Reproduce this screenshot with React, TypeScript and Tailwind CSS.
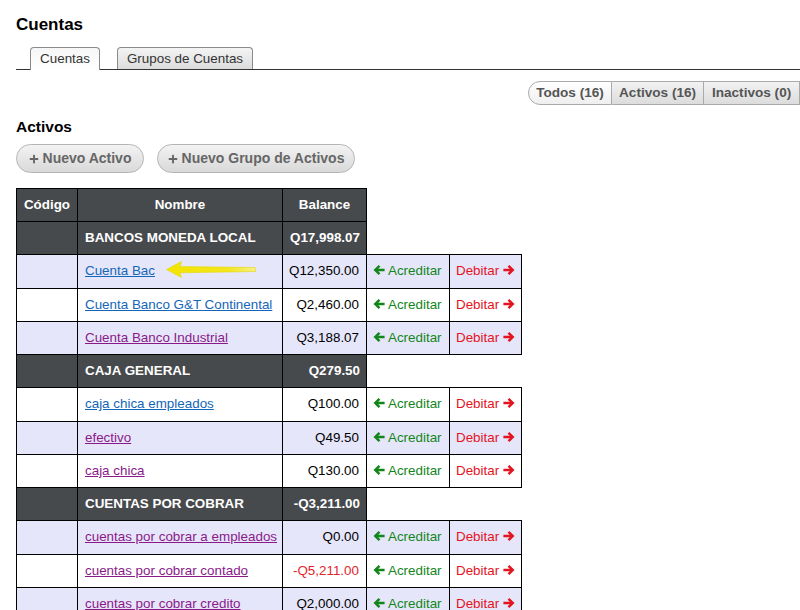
import { FaPlus } from "react-icons/fa";

type Row =
  | { kind: "group"; name: string; balance: string }
  | { kind: "item"; name: string; balance: string; visited?: boolean; negative?: boolean; shaded?: boolean };

const rows: Row[] = [
  { kind: "group", name: "BANCOS MONEDA LOCAL", balance: "Q17,998.07" },
  { kind: "item", name: "Cuenta Bac", balance: "Q12,350.00", shaded: true },
  { kind: "item", name: "Cuenta Banco G&T Continental", balance: "Q2,460.00" },
  { kind: "item", name: "Cuenta Banco Industrial", balance: "Q3,188.07", visited: true, shaded: true },
  { kind: "group", name: "CAJA GENERAL", balance: "Q279.50" },
  { kind: "item", name: "caja chica empleados", balance: "Q100.00" },
  { kind: "item", name: "efectivo", balance: "Q49.50", visited: true, shaded: true },
  { kind: "item", name: "caja chica", balance: "Q130.00", visited: true },
  { kind: "group", name: "CUENTAS POR COBRAR", balance: "-Q3,211.00" },
  { kind: "item", name: "cuentas por cobrar a empleados", balance: "Q0.00", visited: true, shaded: true },
  { kind: "item", name: "cuentas por cobrar contado", balance: "-Q5,211.00", visited: true, negative: true },
  { kind: "item", name: "cuentas por cobrar credito", balance: "Q2,000.00", visited: true, shaded: true },
];

// chunky font-awesome style arrows
function ArrowLeft() {
  return (
    <svg width="12" height="12" viewBox="0 0 12 12" className="inline-block align-[-1px]">
      <path d="M0.5 6 L5.6 0.9 L7.4 2.7 L5.2 4.8 H11.6 V7.2 H5.2 L7.4 9.3 L5.6 11.1 Z" fill="currentColor" />
    </svg>
  );
}

function ArrowRight() {
  return (
    <svg width="12" height="12" viewBox="0 0 12 12" className="inline-block align-[-1px]">
      <path d="M11.5 6 L6.4 0.9 L4.6 2.7 L6.8 4.8 H0.4 V7.2 H6.8 L4.6 9.3 L6.4 11.1 Z" fill="currentColor" />
    </svg>
  );
}

function YellowArrow() {
  return (
    <svg className="absolute left-[164px] top-[259px]" width="96" height="22" viewBox="0 0 96 22">
      <defs>
        <linearGradient id="ya" x1="0" x2="1" y1="0" y2="0">
          <stop offset="0" stopColor="#f2e400" />
          <stop offset="0.7" stopColor="#f3e620" />
          <stop offset="1" stopColor="#f6f08a" />
        </linearGradient>
      </defs>
      <path
        d="M2.5 10.5 L17.5 2.5 L16 7.6 L91 8.5 L92 12.5 L16 13.8 L17.5 18.5 Z"
        fill="url(#ya)"
        stroke="#e6d600"
        strokeWidth="0.6"
        strokeLinejoin="round"
      />
    </svg>
  );
}

export default function App() {
  return (
    <div className="relative h-[610px] w-[800px] overflow-hidden bg-white pl-4 font-['Liberation_Sans',Arial,sans-serif] text-[13.4px] text-black">
      <h1 className="pt-[15px] text-[17px] font-bold leading-5">Cuentas</h1>

      <div className="mt-[12px] flex items-end gap-[17px] border-b border-[#333] pl-[14px]">
        <div className="-mb-px flex h-[23px] w-[70px] items-center justify-center rounded-t-[4px] border border-b-0 border-[#8a8a8a] bg-gradient-to-b from-[#f6f6f6] to-white pt-px text-[13.4px] text-[#333]">
          Cuentas
        </div>
        <div className="flex h-[22px] w-[136px] items-center justify-center rounded-t-[4px] border border-b-0 border-[#8a8a8a] bg-gradient-to-b from-[#f4f4f4] to-[#dcdcdc] pt-px text-[13.4px] text-[#333]">
          Grupos de Cuentas
        </div>
      </div>

      <div className="ml-[512px] mt-[11px] flex h-[24px] whitespace-nowrap text-[13.6px] font-bold text-[#555]">
        <div className="flex w-[91px] items-center justify-center rounded-l-full border border-[#aaa] bg-gradient-to-b from-white to-[#efefef]">
          Todos (16)
        </div>
        <div className="flex w-[100px] items-center justify-center border border-l-0 border-[#aaa] bg-gradient-to-b from-[#f2f2f2] to-[#dcdcdc]">
          Activos (16)
        </div>
        <div className="flex w-[104px] items-center justify-center border border-l-0 border-[#aaa] bg-gradient-to-b from-[#f2f2f2] to-[#dcdcdc]">
          Inactivos (0)
        </div>
      </div>

      <h2 className="mt-[13px] text-[15.5px] font-bold leading-[18px]">Activos</h2>

      <div className="mt-2 flex gap-[13px] text-[14px] font-bold text-[#666]">
        <button className="flex h-[29px] w-[128px] items-center justify-center gap-1 rounded-full border border-[#b5b5b5] bg-gradient-to-b from-[#f3f3f3] to-[#d9d9d9]">
          <FaPlus className="h-[10px] w-[10px]" /> Nuevo Activo
        </button>
        <button className="flex h-[29px] w-[198px] items-center justify-center gap-1 rounded-full border border-[#b5b5b5] bg-gradient-to-b from-[#f3f3f3] to-[#d9d9d9]">
          <FaPlus className="h-[10px] w-[10px]" /> Nuevo Grupo de Activos
        </button>
      </div>

      <table className="mt-[15px] w-[505px] table-fixed border-collapse">
        <colgroup>
          <col className="w-[61px]" />
          <col className="w-[205px]" />
          <col className="w-[84px]" />
          <col className="w-[83px]" />
          <col className="w-[72px]" />
        </colgroup>
        <thead>
          <tr className="h-[33px] bg-[#474a4d] font-bold text-white">
            <th className="border border-black px-[6px] text-center">Código</th>
            <th className="border border-black px-[6px] text-center">Nombre</th>
            <th className="border border-black px-[6px] text-center">Balance</th>
          </tr>
        </thead>
        <tbody>
          {rows.map((r, i) =>
            r.kind === "group" ? (
              <tr key={i} className="h-[33.25px] font-bold text-white">
                <td className="border border-black bg-[#474a4d]" />
                <td className="border border-black bg-[#474a4d] px-[7px]">{r.name}</td>
                <td className="whitespace-nowrap border border-black bg-[#474a4d] pr-[6px] text-right">{r.balance}</td>
              </tr>
            ) : (
              <tr key={i} className={r.shaded ? "h-[33.25px] bg-[#e6e6fa]" : "h-[33.25px] bg-white"}>
                <td className="border border-black" />
                <td className="whitespace-nowrap border border-black pl-[7px] pr-[4px]">
                  <a href="#" className={r.visited ? "text-[#8a1a8a] underline" : "text-[#1466b8] underline"}>
                    {r.name}
                  </a>
                </td>
                <td className={r.negative ? "whitespace-nowrap border border-black pr-[7px] text-right text-[#e0262b]" : "whitespace-nowrap border border-black pr-[7px] text-right"}>
                  {r.balance}
                </td>
                <td className="whitespace-nowrap border border-black pl-[6px] text-[#13861b]">
                  <ArrowLeft /> Acreditar
                </td>
                <td className="whitespace-nowrap border border-black pl-[6px] text-[#e3141e]">
                  Debitar <ArrowRight />
                </td>
              </tr>
            )
          )}
        </tbody>
      </table>

      <YellowArrow />
    </div>
  );
}
